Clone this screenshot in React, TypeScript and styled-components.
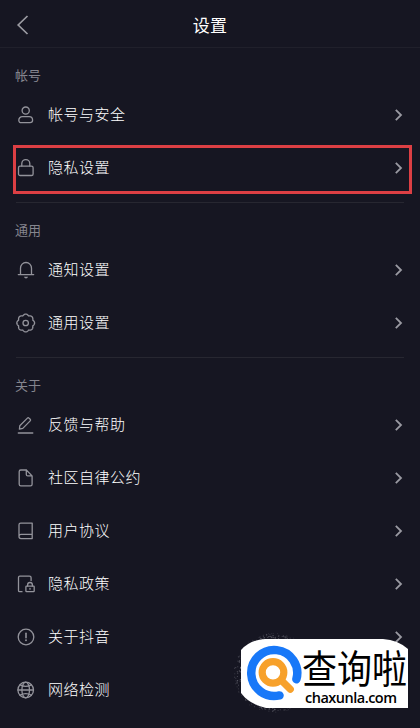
import React from 'react';
import styled, { createGlobalStyle } from 'styled-components';

const GlobalStyle = createGlobalStyle`
  * { box-sizing: border-box; }
  html, body { margin: 0; background: #161622; }
`;

const Page = styled.main`
  position: relative;
  width: 420px;
  height: 728px;
  overflow: hidden;
  background: #161622;
  color: #e9e9ec;
  font-family: 'Noto Sans CJK SC', sans-serif;
`;

const Header = styled.header`
  display: grid;
  grid-template-columns: 48px 1fr 48px;
  align-items: center;
  height: 48px;
  border-bottom: 1px solid #20202b;
`;

const BackButton = styled.button`
  display: flex;
  align-items: center;
  height: 47px;
  padding: 3px 0 0 16px;
  border: 0;
  background: none;
  color: #9b9ba2;
`;

const Title = styled.h1`
  margin: 0;
  padding-top: 2px;
  text-align: center;
  font-size: 17px;
  font-weight: 400;
  line-height: 24px;
  letter-spacing: 0.3px;
  color: #fff;
`;

const Section = styled.section`
  padding-bottom: 8px;
`;

const Divider = styled.hr`
  height: 1px;
  margin: 0 16px;
  border: 0;
  background: #272731;
`;

const SectionLabel = styled.h2`
  height: 40px;
  margin: 0;
  padding: 17px 0 0 15px;
  font-size: 13px;
  font-weight: 400;
  line-height: 20px;
  color: #85858e;
`;

const Row = styled.div`
  position: relative;
  display: flex;
  align-items: center;
  height: 53px;
  padding: 1px 16px 0 15px;
`;

const RowText = styled.span`
  flex: 1;
  margin: -2px 0 0 11px;
  font-size: 15px;
  font-weight: 300;
  letter-spacing: 0.5px;
  line-height: 24px;
  color: #fff;
`;

const Highlight = styled.div`
  position: absolute;
  inset: 4px 8px 0 13px;
  border: 3px solid #dc3f44;
`;

const Glyph = styled.svg`
  display: block;
  flex: none;
  fill: none;
  stroke: #93939b;
  stroke-width: 1.3;
  stroke-linecap: round;
  stroke-linejoin: round;
`;

const Chevron = styled.svg`
  display: block;
  flex: none;
  fill: none;
  stroke: #9a9aa2;
  stroke-width: 1.8;
`;

const Watermark = styled.aside`
  position: absolute;
  left: 234px;
  top: 632px;
  width: 180px;
  height: 84px;
`;

const Plate = styled.svg`
  position: absolute;
  inset: 0;
`;

const BrandText = styled.div`
  position: absolute;
  left: 68px;
  top: 16px;
  display: flex;
  flex-direction: column;
  color: #000;
`;

const BrandName = styled.span`
  height: 38px;
  font-size: 35px;
  font-weight: 400;
  line-height: 38px;
  white-space: nowrap;
  transform: scaleY(1.1);
`;

const BrandSite = styled.span`
  margin: 3px 0 0 3px;
  font-family: 'Open Sans', 'Noto Sans', sans-serif;
  font-size: 14.5px;
  font-weight: 600;
  line-height: 17px;
  letter-spacing: -0.5px;
`;

type IconName =
  | 'user' | 'lock' | 'bell' | 'gear' | 'pen' | 'file' | 'book' | 'policy' | 'info' | 'globe';

const gearPath = (() => {
  const points: string[] = [];
  for (let i = 0; i < 128; i += 1) {
    const angle = (i / 128) * Math.PI * 2;
    const radius = 7.6 + 1.3 * Math.abs(Math.cos(angle * 4));
    points.push(`${(10.7 + radius * Math.sin(angle)).toFixed(2)} ${(11 - radius * Math.cos(angle)).toFixed(2)}`);
  }
  return `M${points.join('L')}Z`;
})();

const icons: Record<IconName, React.ReactNode> = {
  user: (
    <>
      <circle cx="10.7" cy="6.6" r="3.6" />
      <path d="M7.2 12.7H14.2C16.2 12.7 17.6 14.4 17.6 16.3C17.6 18 16.5 18.7 15 18.7H6.4C4.9 18.7 3.8 18 3.8 16.3C3.8 14.4 5.2 12.7 7.2 12.7Z" />
    </>
  ),
  lock: (
    <>
      <rect x="3.5" y="9.2" width="14.6" height="9.3" rx="1.6" />
      <path d="M6.8 9V6.6A4 4 0 0 1 14.8 6.6V9" />
    </>
  ),
  bell: (
    <>
      <path d="M3.3 15.6H18.7M5.5 15.4V9.2A5.5 5.7 0 0 1 16.5 9.2V15.4" />
      <path d="M9 17.7H13Q12.6 19.5 11 19.5Q9.4 19.5 9 17.7Z" fill="#93939b" stroke="none" />
    </>
  ),
  gear: (
    <>
      <path d={gearPath} />
      <circle cx="10.7" cy="11" r="2.7" />
    </>
  ),
  pen: <path d="M3.3 19H17.8M4.4 15.2L4.8 11.7L12.4 4.1Q13.2 3.3 14 4.1L15.2 5.3Q16 6.1 15.2 6.9L7.8 14.4L4.4 15.2Z" />,
  file: <path d="M11.3 3H5.8Q4.2 3 4.2 4.6V17.2Q4.2 18.8 5.8 18.8H15.5Q17.1 18.8 17.1 17.2V8.9L11.3 3V7.4Q11.3 8.9 12.8 8.9H17.1" />,
  book: <path d="M5.7 3.1H17.2V18.6H6Q4 18.6 4 16.6V4.8Q4 3.1 5.7 3.1ZM4 16.2Q4.2 14.4 6 14.4H17.2" />,
  policy: (
    <>
      <path d="M7 18.7H4.7Q3.5 18.7 3.5 17.5V4.5Q3.5 3.2 4.8 3.2H14.5Q16.1 3.2 16.1 4.8V7.5" />
      <rect x="10.9" y="13.1" width="8.3" height="5.6" rx="0.7" />
      <path d="M12.6 13V11.9A2.4 2.4 0 0 1 17.4 11.9V13M15 15.3V16.2" />
    </>
  ),
  info: (
    <>
      <circle cx="11" cy="11" r="7.8" />
      <path d="M11 7.2V11.8" strokeWidth="1.6" />
      <circle cx="11" cy="14.3" r="0.95" fill="#93939b" stroke="none" />
    </>
  ),
  globe: (
    <>
      <circle cx="10.7" cy="11" r="7.8" />
      <ellipse cx="10.7" cy="11" rx="3.8" ry="7.8" />
      <path d="M3 11H18.4M5 5.9Q10.7 9 16.4 5.9M5 16.1Q10.7 13 16.4 16.1" />
    </>
  ),
};

interface Item {
  icon: IconName;
  text: string;
  highlighted?: boolean;
}

const sections: { label: string; items: Item[] }[] = [
  {
    label: '帐号',
    items: [
      { icon: 'user', text: '帐号与安全' },
      { icon: 'lock', text: '隐私设置', highlighted: true },
    ],
  },
  {
    label: '通用',
    items: [
      { icon: 'bell', text: '通知设置' },
      { icon: 'gear', text: '通用设置' },
    ],
  },
  {
    label: '关于',
    items: [
      { icon: 'pen', text: '反馈与帮助' },
      { icon: 'file', text: '社区自律公约' },
      { icon: 'book', text: '用户协议' },
      { icon: 'policy', text: '隐私政策' },
      { icon: 'info', text: '关于抖音' },
      { icon: 'globe', text: '网络检测' },
    ],
  },
];

const SettingRow = ({ icon, text, highlighted }: Item) => (
  <Row>
    <Glyph width="22" height="22" viewBox="0 0 22 22">{icons[icon]}</Glyph>
    <RowText>{text}</RowText>
    <Chevron width="10" height="12" viewBox="0 0 10 12">
      <path d="M1.8 0.9L7 6L1.8 11.1" />
    </Chevron>
    {highlighted && <Highlight />}
  </Row>
);

const noise = (n: number) => {
  const v = Math.sin(n * 127.1 + 11.7) * 43758.5453;
  return v - Math.floor(v);
};

const specks = Array.from({ length: 420 }, (_, i) => {
  const a = noise(i) * Math.PI * 2;
  const spread = noise(i + 1000) ** 1.6;
  return {
    x: 40 + Math.cos(a) * (32 + spread * 9),
    y: 41 + Math.sin(a) * (33 + spread * 7),
    o: 0.5 - spread * 0.4,
  };
});

const Brand = () => (
  <Watermark>
    <Plate width="180" height="84" viewBox="0 0 180 84">
      {specks.map((s, i) => (
        <circle key={i} cx={s.x} cy={s.y} r="0.6" fill="#c9c9d2" opacity={s.o} />
      ))}
      <path d="M31 7H149Q164 8 174 17V76H32Q15 72 7 61V18Q16 8 31 7Z" fill="#fff" />
      <path d="M45.5 63.4A23 23 0 1 1 62.4 47.2" fill="none" stroke="#1878f8" strokeWidth="8.5" strokeLinecap="round" />
      <circle cx="39" cy="40.4" r="10.8" fill="none" stroke="#f7a12b" strokeWidth="7.2" />
      <path d="M48.5 49.5L56.3 57.3" stroke="#f7a12b" strokeWidth="7.2" strokeLinecap="round" />
    </Plate>
    <BrandText>
      <BrandName>查询啦</BrandName>
      <BrandSite>chaxunla.com</BrandSite>
    </BrandText>
  </Watermark>
);

export default function App() {
  return (
    <>
      <GlobalStyle />
      <Page>
        <Header>
          <BackButton aria-label="返回">
            <svg width="14" height="20" viewBox="0 0 14 20" fill="none" stroke="currentColor" strokeWidth="1.7">
              <path d="M11.5 1L2.2 10L11.5 19" />
            </svg>
          </BackButton>
          <Title>设置</Title>
        </Header>
        {sections.map((section, index) => (
          <React.Fragment key={section.label}>
            <Section>
              <SectionLabel>{section.label}</SectionLabel>
              {section.items.map((item) => (
                <SettingRow key={item.text} {...item} />
              ))}
            </Section>
            {index < sections.length - 1 && <Divider />}
          </React.Fragment>
        ))}
        <Brand />
      </Page>
    </>
  );
}
